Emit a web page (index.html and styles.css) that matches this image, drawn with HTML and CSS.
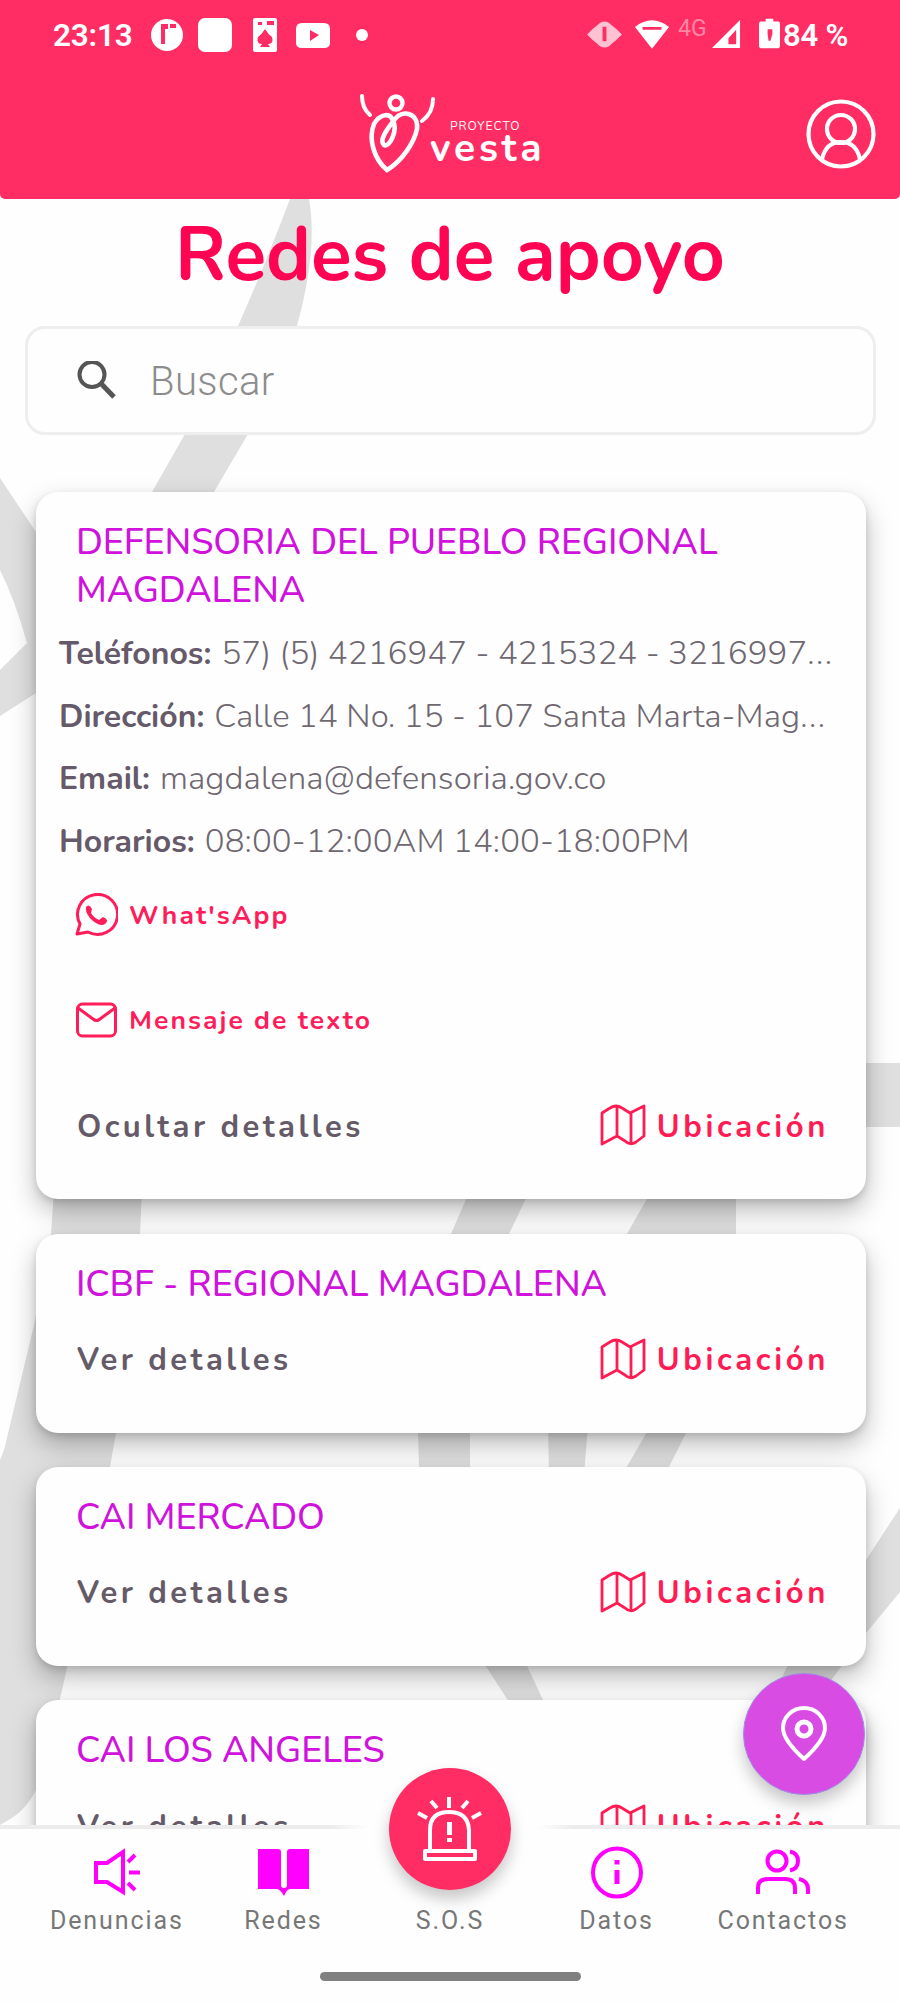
FILE: index.html
```html
<!DOCTYPE html>
<html lang="es">
<head>
<meta charset="utf-8">
<title>Redes de apoyo</title>
<link rel="stylesheet" href="styles.css">
</head>
<body>
<svg class="defs" width="0" height="0" aria-hidden="true">
  <symbol id="map" viewBox="0 0 46 42">
    <path d="M2 9 10 4Q16 0 22 4L30 9 44 2V32L36 38Q30 42 25 37L17 32 2 40ZM17 2V32M31 9V39" fill="none" stroke="currentColor" stroke-width="2.800" stroke-linejoin="round"/>
  </symbol>
</svg>
<div class="screen">
  <svg class="backdrop" viewBox="0 0 900 2003" aria-hidden="true">
    <path d="M290 199H309Q318 250 297 326 280 385 248 434L214 492 100 680H40L152 492 185 434 238 326Q265 265 290 199Z"/>
    <path d="M0 478 36 532 60 600V676L36 693 0 716V670L27 643Q15 600 0 570Z"/>
    <path d="M840 1063H900V1127H840Z"/>
    <path d="M54 1190 51 1234 34 1325 4 1450 0 1460V1825L5 1822Q25 1812 36 1790 50 1745 67 1668L110 1467 116 1433 140 1234 142 1190Z"/>
    <path d="M470 1190H530L509 1234Q470 1340 470 1433V1467L487 1560 528 1668 544 1702H509L487 1668Q419 1560 419 1467L418 1433Q420 1310 451 1234Z"/>
    <path d="M652 1190H736V1260H612ZM548 1425H588L584 1475H549ZM651 1425H690L665 1475H622Z"/>
    <path d="M900 1508 866 1560 800 1640 770 1702H815L866 1633 900 1592Z"/>
  </svg>

  <header class="header">
    <div class="status">
      <div class="status-left">
        <span class="clock">23:13</span>
        <svg class="notifications" viewBox="0 0 220 40" fill="#fff">
          <path fill-rule="evenodd" d="M16 4a16 16 0 1 1 0 32 16 16 0 0 1 0-32ZM10 9V29H14V21V14H17V9ZM19 9V13H25V9Z"/>
          <rect x="47" y="3" width="34" height="34" rx="7"/>
          <path fill-rule="evenodd" d="M104 3H124Q126 3 126 5V35Q126 37 124 37H104Q102 37 102 35V5Q102 3 104 3ZM107 7V10H111V7ZM116 6V10H123V6ZM114 14Q111 19 107 22 105 29 111 29L109 32H119L117 29Q123 29 121 22 117 19 114 14Z"/>
          <path fill-rule="evenodd" d="M151 8H173Q179 8 179 14V28Q179 33 173 33H151Q145 33 145 28V14Q145 8 151 8ZM159 15V26L168 20Z"/>
          <circle cx="211" cy="20" r="6"/>
        </svg>
      </div>
      <div class="status-right">
        <svg class="vibrate" viewBox="0 0 36 30"><path fill="#ffc2d2" fill-rule="evenodd" d="M0 15 6 9 10 6Q18-3 26 6L30 9 36 15 30 21 26 24Q18 33 10 24L6 21ZM16 7V22H20V7Z"/></svg>
        <svg class="wifi" viewBox="0 0 36 32"><path fill="#fff" fill-rule="evenodd" d="M0 8Q18-6 36 8L18 31ZM8 8H28V11H8Z"/></svg>
        <span class="network">4G</span>
        <svg class="signal" viewBox="0 0 30 30"><path fill="#fff" fill-rule="evenodd" d="M0 29 29 0V29ZM17 25H25V10L17 19Z"/></svg>
        <svg class="battery" viewBox="0 0 22 34"><path fill="#fff" fill-rule="evenodd" d="M2 4H7V1H15V4H20Q22 4 22 7V29Q22 32 19 32H3Q0 32 0 29V7Q0 4 2 4ZM9 12V17L10 24H12L14 17V12Z"/></svg>
        <span class="percent">84 %</span>
      </div>
    </div>
    <div class="brand-bar">
      <div class="brand">
        <svg class="brand-mark" viewBox="0 0 80 80" fill="none" stroke="#fff" stroke-linecap="round">
          <path d="M3 3Q3 15 11 22M74 6Q74 20 63 28" stroke-width="4"/>
          <circle cx="37" cy="10" r="6.500" stroke-width="4.400"/>
          <path d="M34 28C31 18 20 22 15 31C9 46 15 66 28 77C43 68 55 50 58 36C60 20 43 16 36 26C30 34 19 47 25 52C31 55 39 36 34 28" stroke-width="4.600"/>
        </svg>
        <div class="brand-text"><span class="brand-small">PROYECTO</span><span class="brand-name">vesta</span></div>
      </div>
      <svg class="profile" viewBox="0 0 70 70" fill="none" stroke="#fff" stroke-width="4.200">
        <circle cx="35" cy="35" r="32.500"/><circle cx="35" cy="30" r="14"/><path d="M16 60Q20 43 35 43T54 60"/>
      </svg>
    </div>
  </header>

  <main class="main">
    <h1 class="title">Redes de apoyo</h1>
    <div class="search">
      <svg class="search-icon" viewBox="0 0 40 40" fill="none" stroke="#555"><circle cx="15" cy="13.500" r="12.500" stroke-width="4"/><path d="M23.500 22 37 36" stroke-width="5"/></svg>
      <span class="search-text">Buscar</span>
    </div>
    <div class="cards">
      <article class="card">
        <h2 class="card-title">DEFENSORIA DEL PUEBLO REGIONAL<br>MAGDALENA</h2>
        <div class="details">
          <p class="row"><b class="key">Teléfonos:</b> <span class="val">57) (5) 4216947 - 4215324 - 3216997<span class="dots">...</span></span></p>
          <p class="row"><b class="key">Dirección:</b> <span class="val">Calle 14 No. 15 - 107 Santa Marta-Mag<span class="dots">...</span></span></p>
          <p class="row"><b class="key">Email:</b> <span class="val">magdalena@defensoria.gov.co</span></p>
          <p class="row"><b class="key">Horarios:</b> <span class="val">08:00-12:00AM 14:00-18:00PM</span></p>
        </div>
        <div class="action whatsapp">
          <svg class="action-icon" viewBox="0 0 44 44" fill="none" stroke="currentColor"><path d="M3 41 6 31A20 20 0 1 1 14 39Z" stroke-width="3" stroke-linejoin="round"/><path d="M12 14Q15 10 18 16L17 20Q20 25 25 27L29 24Q36 27 31 31 27 34 19 28 11 21 12 14Z" fill="currentColor" stroke="none"/></svg>
          <span>What'sApp</span>
        </div>
        <div class="action message">
          <svg class="action-icon" viewBox="0 0 44 44" fill="none" stroke="currentColor" stroke-width="3"><rect x="3.500" y="6" width="38" height="32" rx="5"/><path d="M4 10 19 21Q22.500 24 26 21L41 10"/></svg>
          <span>Mensaje de texto</span>
        </div>
        <div class="card-foot"><span class="toggle">Ocultar detalles</span><span class="location"><svg class="map"><use href="#map"/></svg>Ubicación</span></div>
      </article>
      <article class="card">
        <h2 class="card-title gap">ICBF - REGIONAL MAGDALENA</h2>
        <div class="card-foot"><span class="toggle">Ver detalles</span><span class="location"><svg class="map"><use href="#map"/></svg>Ubicación</span></div>
      </article>
      <article class="card">
        <h2 class="card-title gap">CAI MERCADO</h2>
        <div class="card-foot"><span class="toggle">Ver detalles</span><span class="location"><svg class="map"><use href="#map"/></svg>Ubicación</span></div>
      </article>
      <article class="card">
        <h2 class="card-title gap">CAI LOS ANGELES</h2>
        <div class="card-foot"><span class="toggle">Ver detalles</span><span class="location"><svg class="map"><use href="#map"/></svg>Ubicación</span></div>
      </article>
    </div>
  </main>

  <button class="fab pin" aria-label="Mapa">
    <svg viewBox="0 0 46 56" width="46" height="56" fill="none" stroke="#fff" stroke-width="4"><path d="M23 53Q2 34 2 22A21 20 0 0 1 44 22Q44 34 23 53Z" stroke-linejoin="round"/><circle cx="23" cy="23" r="7" stroke-width="5"/></svg>
  </button>

  <nav class="nav">
    <div class="tab"><svg class="tab-icon" viewBox="0 0 54 54" fill="none" stroke="#f0f" stroke-width="4"><path d="M6 17H17L33 6V46L17 36H6Z"/><path d="M38 16 45 9M39 26.500H50M38 37 45 44"/></svg><span>Denuncias</span></div>
    <div class="tab"><svg class="tab-icon" viewBox="0 0 54 54" fill="#f0f"><path d="M2 3H22Q25 3 25 6V39Q25 42 28 42T31 39V6Q31 3 34 3H53V43H34Q31 43 28 50 24 43 21 43H2Z"/></svg><span>Redes</span></div>
    <div class="tab"><span class="tab-icon"></span><span>S.O.S</span></div>
    <div class="tab"><svg class="tab-icon" viewBox="0 0 54 54" fill="none" stroke="#f0f" stroke-width="4"><circle cx="27" cy="26.500" r="24"/><path d="M27 24V38M27 14V18.500" stroke-width="5"/></svg><span>Datos</span></div>
    <div class="tab"><svg class="tab-icon" viewBox="0 0 54 54" fill="none" stroke="#f0f" stroke-width="4"><circle cx="21" cy="15" r="9.500"/><path d="M34 5.500Q42 7 42 15T34 24.500M2 48V42Q2 33 12 33H29Q39 33 39 42V48M43 33Q52 35 52 43V48"/></svg><span>Contactos</span></div>
    <button class="fab sos" aria-label="S.O.S">
      <svg viewBox="0 0 70 66" width="70" height="66" fill="none" stroke="#fff" stroke-width="4" stroke-linejoin="round"><path d="M15 55V34Q15 16 34 16T54 34V55M10 55H60V63H10ZM34 1V12M16 5 22 12M53 5 47 12M3 17 12 22M66 17 57 22"/><path d="M34.500 26V39M34.500 42V46" stroke-width="5"/></svg>
    </button>
    <div class="home-bar"></div>
  </nav>
</div>
</body>
</html>
```
FILE: styles.css
```css
* { box-sizing: border-box; }
body { margin: 0; background: #fefefe; font-family: Nunito, Lato, sans-serif; }
h1, h2, p { margin: 0; }
button { border: 0; padding: 0; }
.defs { position: absolute; }
.screen { position: relative; width: 900px; height: 2003px; overflow: hidden; background: #fefefe; }
.backdrop { position: absolute; inset: 0; width: 900px; height: 2003px; fill: #dfdfdf; }

.header { position: relative; height: 199px; background: #ff2d64; border-radius: 0 0 5px 5px; }
.status { display: flex; justify-content: space-between; height: 68px; padding: 0 48px 0 53px; font-family: Roboto, sans-serif; color: #fff; }
.status-left, .status-right { display: flex; align-items: center; }
.clock { font-size: 31.500px; font-weight: 600; width: 98px; line-height: 68px; padding-top: 3px; letter-spacing: -.2px; }
.notifications { width: 220px; height: 40px; margin-top: 1px; }
.vibrate { width: 35px; height: 29px; margin-right: 13px; }
.wifi { width: 34px; height: 31px; margin-right: 9px; }
.network { font-size: 23px; color: #ff86a5; width: 29px; margin-right: 5px; margin-top: -12px; }
.signal { width: 29px; height: 29px; margin-right: 18px; }
.battery { width: 21px; height: 34px; margin-right: 3px; }
.percent { font-size: 31px; font-weight: 600; width: 69px; line-height: 68px; padding-top: 3px; white-space: nowrap; letter-spacing: -.2px; }
.brand-bar { display: grid; grid-template-columns: 1fr auto 1fr; height: 131px; }
.brand { grid-column: 2; display: flex; padding-top: 25px; margin-left: 1px; }
.brand-mark { width: 80px; height: 80px; }
.brand-text { display: flex; flex-direction: column; width: 112px; margin-left: -9px; padding-top: 26px; color: #fff; }
.brand-small { font-size: 12px; line-height: 14px; padding-left: 20px; letter-spacing: 1px; }
.brand-name { font-size: 39px; line-height: 32px; font-weight: 700; letter-spacing: 3.800px; }
.profile { width: 70px; height: 70px; justify-self: end; margin: 31px 24px 0 0; }

.main { position: relative; padding: 12px 24px 0; }
.title { text-align: center; font-size: 75px; line-height: 88px; font-weight: 700; color: #ff0452; }
.search { display: flex; align-items: center; height: 109px; margin: 27px 0 0 1px; border: 3px solid #eee; border-radius: 20px; background: #fefefe; padding-left: 49px; }
.search-icon { width: 40px; height: 40px; }
.search-text { font: 300 40px/50px Roboto, sans-serif; color: #8c8c8c; margin-left: 33px; letter-spacing: .4px; padding-top: 3px; }
.cards { display: flex; flex-direction: column; gap: 34.300px; margin: 57px 10px 0 12px; }
.card { background: #fefefe; border-radius: 22px; padding: 27px 38px 31px 40px; box-shadow: 0 12px 26px rgba(0,0,0,.26), 0 3px 7px rgba(0,0,0,.13); }
.card-title { font-size: 36px; line-height: 48px; font-weight: 500; color: #cf13dc; white-space: nowrap; letter-spacing: -.08px; }
.card-title.gap { margin-bottom: 9px; }
.details { margin: 8px 0 0 -17px; }
.row { height: 62.600px; line-height: 62.600px; font-size: 33px; white-space: nowrap; color: #6f6871; display: flex; gap: 10px; }
.key { font-weight: 700; font-size: 32px; color: #65596a; }
.val { font-weight: 300; letter-spacing: .1px; }
.dots { letter-spacing: 1.500px; }
.action { display: flex; align-items: center; gap: 11px; margin-left: -2px; color: #ff1c5b; font-size: 26.500px; font-weight: 700; letter-spacing: 2.050px; }
.action span { margin-top: -2px; }
.action-icon { width: 44px; height: 44px; margin-top: -2px; }
.whatsapp { height: 85px; }
.message { height: 126px; }
.card-foot { display: flex; align-items: center; justify-content: space-between; height: 84px; font-size: 31px; font-weight: 700; letter-spacing: 3.450px; }
.toggle { color: #655b68; padding: 1px 0 0 1px; }
.location { display: flex; align-items: center; color: #ff1c55; gap: 11px; letter-spacing: 3.650px; padding-top: 1px; margin-right: -1px; }
.map { width: 46px; height: 42px; margin-top: -3px; }

.fab { position: absolute; display: flex; align-items: center; justify-content: center; width: 122px; height: 122px; border-radius: 50%; box-shadow: 0 9px 16px rgba(0,0,0,.22); }
.pin { left: 743px; top: 1673px; background: #d94ce4; border: 1px solid #9f8ce8; }
.nav { position: absolute; left: 0; bottom: 0; width: 900px; height: 175px; display: flex; padding: 18px 33.500px 0; background: #fefefe; }
.nav::before, .nav::after { content: ""; position: absolute; top: -3px; left: 0; width: 368px; height: 4px; background: linear-gradient(90deg, #ececec 90%, transparent); }
.nav::after { left: auto; right: 0; width: 362px; transform: scaleX(-1); }
.tab { flex: 1; display: flex; flex-direction: column; align-items: center; font: 400 25px/32px Roboto, sans-serif; color: #777; letter-spacing: 1.900px; }
.tab-icon { width: 54px; height: 54px; margin-bottom: 5px; }
.sos { left: 389px; top: -60px; background: #ff2d64; }
.home-bar { position: absolute; left: 320px; bottom: 22px; width: 261px; height: 9px; border-radius: 5px; background: #808080; }
```
